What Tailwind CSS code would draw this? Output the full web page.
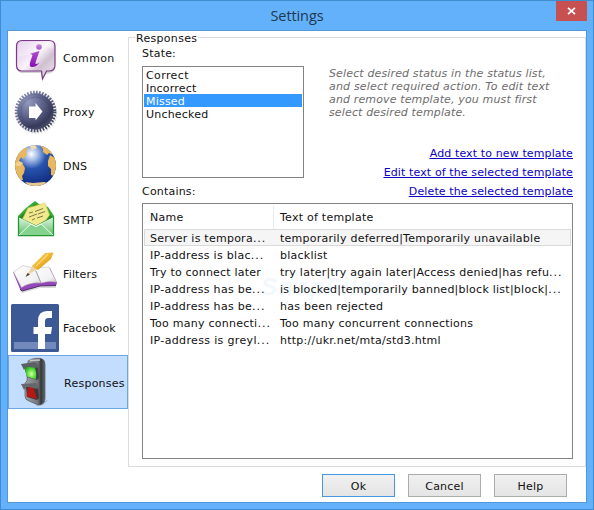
<!DOCTYPE html>
<html lang="en">
<head>
<meta charset="utf-8">
<title>Settings</title>
<script src="https://cdn.jsdelivr.net/npm/@tailwindcss/browser@4"></script>
</head>
<body class="w-[594px] h-[510px] overflow-hidden">
<div class="w-[594px] h-[510px] flex flex-col bg-[#64b1fb] border border-[#418bcf] px-[6px] pb-[6px] font-['DejaVu_Sans',sans-serif] text-[11px] leading-[13px] text-[#111] whitespace-nowrap">
  <header class="h-[29px] shrink-0 flex justify-end relative">
    <h1 class="absolute inset-x-0 top-[5px] text-center font-['Open_Sans',sans-serif] text-[14.5px] leading-[20px] tracking-[-0.1px] text-[#1d3850]">Settings</h1>
    <button class="w-[31px] h-[20px] bg-[#c75050] flex items-center justify-center" aria-label="Close">
      <svg width="9" height="8" viewBox="0 0 9 8"><path d="M1 .8 8 7.2M8 .8 1 7.2" stroke="#fff" stroke-width="1.7"/></svg>
    </button>
  </header>
  <main class="flex-1 min-h-0 bg-white border border-[#5598d8] flex flex-col">
    <div class="flex h-[436px]">
      <nav class="w-[120px] flex flex-col">
        <a class="h-[54px] flex items-center">
          <svg class="w-[50px] h-[50px] ml-[2px]" viewBox="0 0 50 50">
            <defs><linearGradient id="bub" x1="0" y1="0" x2="1" y2="1"><stop offset="0" stop-color="#d9bde4"/><stop offset=".45" stop-color="#fbf3fb"/><stop offset=".65" stop-color="#cfc0d0"/><stop offset="1" stop-color="#f4e8f5"/></linearGradient>
            <linearGradient id="eye" x1="0" y1="0" x2="0" y2="1"><stop offset="0" stop-color="#b04fd2"/><stop offset="1" stop-color="#860fae"/></linearGradient></defs>
            <path d="M6 35q2 6 9 5l16 0 1 6 4-5q8 0 9-7" fill="#999" opacity=".45"/>
            <path d="M12 7.500H39Q45 7.500 45 13V32Q45 38 39 38H36.500L32.500 46 31.500 38H12Q6.500 38 6.500 32V13Q6.500 7.500 12 7.500Z" fill="url(#bub)" stroke="#7b3a85" stroke-width="1.200"/>
            <circle cx="29" cy="14" r="2.800" fill="url(#eye)"/>
            <path d="M20 20.500 29.500 18 25.500 29.500Q25 32.500 29.500 29.500 26 34.500 21.500 34 18.500 33.500 20.500 28L22.500 22Z" fill="url(#eye)"/>
            <path d="M12 9H38Q44 9 43 16L36 14 22 21 8 24V14Q8 9 12 9Z" fill="#fff" opacity=".3"/>
          </svg><span class="ml-[3px] tracking-[0.35px]">Common</span>
        </a>
        <a class="h-[54px] flex items-center">
          <svg class="w-[50px] h-[50px] ml-[2px]" viewBox="0 0 50 50">
            <defs><linearGradient id="gear" x1="0" y1="0" x2="1" y2="1"><stop offset="0" stop-color="#8c90b4"/><stop offset=".5" stop-color="#5b5f88"/><stop offset="1" stop-color="#30334a"/></linearGradient>
            <radialGradient id="disc" cx=".3" cy=".25" r=".85"><stop offset="0" stop-color="#9499bf"/><stop offset=".45" stop-color="#5f648d"/><stop offset=".8" stop-color="#383b5a"/><stop offset="1" stop-color="#4b4e6a"/></radialGradient></defs>
            <circle cx="26.500" cy="26" r="19" fill="none" stroke="#999" stroke-width="3.500" stroke-dasharray="1.500 1.500" opacity=".4"/>
            <circle cx="25.500" cy="24.500" r="19" fill="none" stroke="url(#gear)" stroke-width="3.600" stroke-dasharray="1.600 1.385"/>
            <circle cx="25.500" cy="24.500" r="18.200" fill="url(#disc)"/>
            <circle cx="25.500" cy="24.500" r="14.500" fill="none" stroke="#34375a" stroke-width="1" opacity=".25"/>
            <path d="M19 19.500H25.500V16L32.500 24.500 25.500 33.500V31H19Z" fill="#fff"/>
          </svg><span class="ml-[3px] tracking-[0.35px]">Proxy</span>
        </a>
        <a class="h-[54px] flex items-center">
          <svg class="w-[50px] h-[50px] ml-[2px]" viewBox="0 0 50 50">
            <defs><radialGradient id="sea" cx=".4" cy=".22" r=".75"><stop offset="0" stop-color="#fff"/><stop offset=".2" stop-color="#a8bfea"/><stop offset=".48" stop-color="#2854ae"/><stop offset="1" stop-color="#122e83"/></radialGradient>
            <clipPath id="globe"><circle cx="25.500" cy="24.500" r="20.500"/></clipPath></defs>
            <circle cx="25.500" cy="24.500" r="20.500" fill="url(#sea)"/>
            <g clip-path="url(#globe)" fill="#e8b75e">
              <path d="M4 15 8 14 9 10 14 7 18 7 16 11 17 14 13 18 11 16 9 20 12 22 15 27 14 32 12 35 13 39 9 39 4 31Z"/>
              <path d="M5 23 9 20 13 22 10 25 7 25Z" fill="#f4d18b"/>
              <path d="M20 5 25 4 27 7 22 9Z" fill="#f2ddb0"/>
              <path d="M29 3 34 4 39 8 43 14 39 12 37 14 33 11 33 8Z"/>
              <path d="M40 14 45 17 47 25 44 35 41 34 41 28 38 25 38 20Z"/>
              <path d="M15 41 23 42 34 41 38 42 31 47 20 46Z" fill="#e7c88e"/>
            </g>
          </svg><span class="ml-[3px] tracking-[0.2px]">DNS</span>
        </a>
        <a class="h-[54px] flex items-center">
          <svg class="w-[50px] h-[50px] ml-[2px]" viewBox="0 0 50 50">
            <defs><linearGradient id="env" x1="0" y1="0" x2="0" y2="1"><stop offset="0" stop-color="#dcf5e0"/><stop offset="1" stop-color="#5cba67"/></linearGradient></defs>
            <path d="M8 21 16 13 25 6 29 9 38 12 44 21V40H8Z" fill="#35ad35"/>
            <path d="M9 22 25 9 43 22 36 29H15Z" fill="#238a26"/>
            <path d="M18 13 35 8 39.500 20 36 25 26 31 12 25Z" fill="#f2e98e" stroke="#d9c951" stroke-width=".6"/>
            <path d="M19 18 23 17M25 16.500 33 13.500M19 22 27 19M28 19 35 16.500M22 25 25 23.500M27 23 33 21" stroke="#716b43" stroke-width=".9"/>
            <path d="M8.500 22.500 26 31 43.500 22.500V40.500H8.500Z" fill="url(#env)" stroke="#259732" stroke-width="1.300"/>
            <path d="M9 40 21 29 26 31.500 31 29 43 40" fill="#85d18e" stroke="#eaffea" stroke-width="1"/>
            <path d="M9 23 26 31.500 43 23" fill="none" stroke="#f4fff4" stroke-width="1"/>
          </svg><span class="ml-[3px] tracking-[0.15px]">SMTP</span>
        </a>
        <a class="h-[54px] flex items-center">
          <svg class="w-[50px] h-[50px] ml-[2px]" viewBox="0 0 50 50">
            <defs><linearGradient id="page" x1="0" y1="0" x2="1" y2="1"><stop offset="0" stop-color="#fff"/><stop offset=".7" stop-color="#f1f0f2"/><stop offset="1" stop-color="#c9c7cb"/></linearGradient>
            <linearGradient id="pen" x1="0" y1="0" x2="1" y2="1"><stop offset="0" stop-color="#ffe590"/><stop offset=".5" stop-color="#efb52d"/><stop offset="1" stop-color="#c98212"/></linearGradient></defs>
            <path d="M9 41 12 44 30 39 46 39 46 36Z" fill="#aaa" opacity=".45"/>
            <path d="M3 23 10 40 12 42 30 37 46 36.500 47 34 40 19Z" fill="#9447ba"/>
            <path d="M10 40 12 42 30 37 46 36.500" fill="none" stroke="#4d2a63" stroke-width="1"/>
            <path d="M3.500 23 13 16.500 27 20 31 34Q20 33 11.500 38.500Z" fill="url(#page)" stroke="#b5b1b8" stroke-width=".5"/>
            <path d="M24 19 39 18 46.500 33Q38 31.500 31 34L26 22Z" fill="url(#page)" stroke="#b5b1b8" stroke-width=".5"/>
            <path d="M26 22 31 34" stroke="#aaa5ae" stroke-width="1"/>
            <path d="M17 26 23 16 28 20 19 25Z" fill="#ecd3a3"/>
            <path d="M22 17 35 4 43.500 3.500 41 10 28 21Z" fill="url(#pen)"/>
            <path d="M26 17 38 5.500" stroke="#ffe9a8" stroke-width="1"/>
            <path d="M15.500 28 17.500 24 20 25.500Z" fill="#54412e"/>
          </svg><span class="ml-[3px] tracking-[0.15px]">Filters</span>
        </a>
        <a class="h-[54px] flex items-center">
          <svg class="w-[50px] h-[50px] ml-[2px]" viewBox="0 0 50 50">
            <rect x="1" y="1" width="48" height="48" rx="1.500" fill="#3c5895"/>
            <rect x="4" y="39" width="42" height="7" fill="#718abb"/>
            <path d="M28 46V31H23.500V24H28V18Q28 8 37 8H42V15H38.500Q35 15 35 18V24H42L41 31H35V46Z" fill="#fff"/>
          </svg><span class="ml-[3px] tracking-[0.15px]">Facebook</span>
        </a>
        <a class="h-[54px] flex items-center bg-[#c2ddfd] border border-[#6ea8e4]">
          <svg class="w-[50px] h-[50px] ml-[1px]" viewBox="0 0 50 50">
            <defs><linearGradient id="metal" x1="0" y1="0" x2="1" y2="0"><stop offset="0" stop-color="#a1a4a7"/><stop offset=".65" stop-color="#707377"/><stop offset=".8" stop-color="#33373a"/><stop offset="1" stop-color="#66696d"/></linearGradient>
            <radialGradient id="go" cx=".6" cy=".6" r=".6"><stop offset="0" stop-color="#d6ffa8"/><stop offset=".6" stop-color="#4edc31"/><stop offset="1" stop-color="#2a9a2a"/></radialGradient></defs>
            <path d="M32 45 38 43 33 48 26 49Z" fill="#8094aa" opacity=".6"/>
            <path d="M18 4Q23 .500 31 1.500 35 2.500 35 7V42Q34 48 28 48L19 44Q15 43 15 39V26L17 24Z" fill="url(#metal)" stroke="#55585c" stroke-width=".7"/>
            <path d="M14 9 28 8 29 21 27 23 17 20Z" fill="#3d4341"/>
            <path d="M14 10 24 8.500Q27 14 26 22.500L17 19.500Z" fill="url(#go)"/>
            <path d="M11 7 25 5 29 9 27 11 16 9.500 14 13Z" fill="#5c6063"/>
            <path d="M16 30 28 29 29 41 27 43 17 40Z" fill="#3b3535"/>
            <path d="M18 30 23.500 30 27 42 16.500 39.500Z" fill="#b51915"/>
            <path d="M11 27 26 26 29 30 27 32 17 29.500 14 33Z" fill="#64686c"/>
            <path d="M20 3.500 30 3" stroke="#c4c6c8" stroke-width="1.300"/>
          </svg><span class="ml-[4px] pt-[2px] tracking-[0.25px]">Responses</span>
        </a>
      </nav>
      <fieldset class="w-[458px] h-[436px] border border-[#dcdcdc] min-w-0 flex-none">
        <legend class="ml-[6px] px-[1px] h-[13px] leading-[15px] tracking-[0.3px]">Responses</legend>
        <div class="pl-[13px] pr-[12px] flex flex-col">
          <div class="flex justify-between h-[159px]">
            <div class="w-[162px] pt-[3px] flex flex-col">
              <label class="tracking-[0.2px]">State:</label>
              <ul class="mt-[6px] w-[162px] h-[112px] border border-[#828387] p-px flex flex-col leading-[15px] tracking-[0.2px]">
                <li class="h-[13px] pl-[2px] tracking-[0.4px]">Correct</li>
                <li class="h-[13px] pl-[2px]">Incorrect</li>
                <li class="h-[13px] pl-[2px] bg-[#3399ff] text-white">Missed</li>
                <li class="h-[13px] pl-[2px]">Unchecked</li>
              </ul>
              <label class="mt-[7px] tracking-[0.2px]">Contains:</label>
            </div>
            <div class="w-[244px] pt-[23px] flex flex-col">
              <p class="italic text-[#6d6d6d] tracking-[0.14px]">Select desired status in the status list,<br><span class="tracking-[0.18px]">and select required action. To edit text</span><br>and remove template, you must first<br>select desired template.</p>
              <div class="mt-[28px] flex flex-col items-end gap-[6px] text-[#0b00c4] underline tracking-[0.12px]">
                <a>Add text to new template</a>
                <a>Edit text of the selected template</a>
                <a>Delete the selected template</a>
              </div>
            </div>
          </div>
          <div class="w-[431px] h-[256px] border border-[#828387] p-px relative isolate tracking-[0.25px]">
            <div class="absolute -z-10 left-[118px] top-[70px] font-['Liberation_Sans',sans-serif] font-bold italic text-[24px] leading-[25px] tracking-[1.5px] text-[#f2f8fc]" aria-hidden="true">SnapFiles</div>
            <div class="h-[24px] flex items-center pt-px">
              <span class="w-[130px] h-full pl-[6px] border-r border-[#e8eaec] leading-[23px]">Name</span><span class="pl-[6px]">Text of template</span>
            </div>
            <div class="h-[17px] flex items-center border border-[#dadada] bg-[#f5f5f5] pl-[5px] pt-[2px]"><span class="w-[130px]">Server is tempora<span class="tracking-[1px]">...</span></span><span>temporarily deferred|Temporarily unavailable</span></div>
            <div class="h-[17px] flex items-center pl-[6px] pt-[2px]"><span class="w-[130px] tracking-[0.3px]">IP-address is blac<span class="tracking-[1px]">...</span></span><span>blacklist</span></div>
            <div class="h-[17px] flex items-center pl-[6px] pt-[2px]"><span class="w-[130px] tracking-[0.2px]">Try to connect later</span><span>try later|try again later|Access denied|has refu<span class="tracking-[1px]">...</span></span></div>
            <div class="h-[17px] flex items-center pl-[6px] pt-[2px]"><span class="w-[130px] tracking-[0.3px]">IP-address has be<span class="tracking-[1px]">...</span></span><span>is blocked|temporarily banned|block list|block|<span class="tracking-[1px]">...</span></span></div>
            <div class="h-[17px] flex items-center pl-[6px] pt-[2px]"><span class="w-[130px] tracking-[0.3px]">IP-address has be<span class="tracking-[1px]">...</span></span><span>has been rejected</span></div>
            <div class="h-[17px] flex items-center pl-[6px] pt-[2px]"><span class="w-[130px]">Too many connecti<span class="tracking-[1px]">...</span></span><span>Too many concurrent connections</span></div>
            <div class="h-[17px] flex items-center pl-[6px] pt-[2px]"><span class="w-[130px] tracking-[0.35px]">IP-address is greyl<span class="tracking-[1px]">...</span></span><span>http://ukr.net/mta/std3.html</span></div>
          </div>
        </div>
      </fieldset>
    </div>
    <footer class="flex justify-end gap-[13px] pr-[19px] pt-[7px] tracking-[0.2px]">
      <button class="w-[73px] h-[23px] border border-[#4796e3] bg-linear-to-b from-[#f0f0f0] to-[#e5e5e5] pt-px">Ok</button>
      <button class="w-[73px] h-[23px] border border-[#acacac] bg-linear-to-b from-[#f0f0f0] to-[#e5e5e5] pt-px">Cancel</button>
      <button class="w-[73px] h-[23px] border border-[#acacac] bg-linear-to-b from-[#f0f0f0] to-[#e5e5e5] pt-px">Help</button>
    </footer>
  </main>
</div>
</body>
</html>
